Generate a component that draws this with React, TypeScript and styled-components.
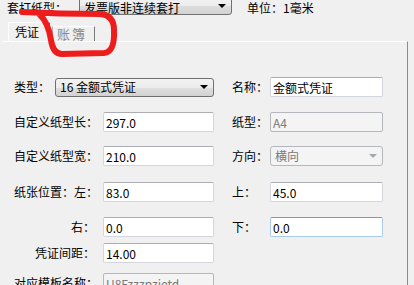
import React from 'react'
import styled, { createGlobalStyle } from 'styled-components'

const FONT = `'Noto Sans CJK SC', 'DejaVu Sans', sans-serif`

const GlobalStyle = createGlobalStyle`
  body {
    margin: 0;
    background: #f0f0f0;
    overflow: hidden;
  }
  * {
    box-sizing: border-box;
  }
`

const Screen = styled.div`
  position: relative;
  width: 414px;
  height: 285px;
  overflow: hidden;
  background: #f0f0f0;
  color: #000;
  font-family: ${FONT};
  font-size: 12px;
  line-height: 14px;
`

const TopBar = styled.div`
  display: flex;
  align-items: center;
  height: 21px;
  margin-top: -5px;
  padding-left: 7px;
`

const TopLabel = styled.span`
  width: 72px;
  padding-top: 4px;
`

const Unit = styled.span`
  margin-left: 15px;
  padding-top: 4px;
`

const Combo = styled.div<{ $width: number; $disabled?: boolean }>`
  display: flex;
  align-items: center;
  justify-content: space-between;
  width: ${({ $width }) => $width}px;
  height: ${({ $disabled }) => ($disabled ? 20 : 19)}px;
  padding: 0 5px 0 4px;
  border: 1px solid ${({ $disabled }) => ($disabled ? '#b4b8bc' : '#707070')};
  border-radius: 3px;
  background: ${({ $disabled }) =>
    $disabled
      ? '#f4f4f4'
      : 'linear-gradient(#f3f3f3, #ececec 50%, #dfdfdf 51%, #d2d2d2)'};
  color: ${({ $disabled }) => ($disabled ? '#7a7a7a' : '#000')};
  white-space: nowrap;
`

const Arrow = styled.span<{ $disabled?: boolean }>`
  width: 0;
  height: 0;
  border-left: 4px solid transparent;
  border-right: 4px solid transparent;
  border-top: 4px solid ${({ $disabled }) => ($disabled ? '#a8a8a8' : '#000')};
`

const TabStrip = styled.div`
  display: flex;
  align-items: stretch;
  height: 19px;
  margin-top: 6px;
  padding-left: 8px;
`

const Tab = styled.div<{ $active?: boolean }>`
  display: flex;
  align-items: center;
  flex: none;
  white-space: nowrap;
  width: ${({ $active }) => ($active ? 42 : 43)}px;
  padding-left: ${({ $active }) => ($active ? 6 : 4)}px;
  margin-left: ${({ $active }) => ($active ? 0 : 2)}px;
  margin-top: ${({ $active }) => ($active ? 0 : 4)}px;
  color: ${({ $active }) => ($active ? '#000' : '#8a8a8a')};
  font-size: ${({ $active }) => ($active ? 12 : 13)}px;
  border-left: 1px solid ${({ $active }) => ($active ? '#fff' : '#b0b0b0')};
  border-right: 1px solid #7a7a7a;
  border-top: 1px solid #fff;
  letter-spacing: ${({ $active }) => ($active ? 0 : 2)}px;
`

const Panel = styled.div`
  width: 406px;
  height: 260px;
  margin-left: 2px;
  border-top: 1px solid #fff;
  border-right: 1px solid #8c8c8c;
  padding: 35px 0 0 12px;
`

const Row = styled.div<{ $wide?: boolean; $gap: number }>`
  display: grid;
  grid-template-columns: ${({ $wide }) =>
    $wide ? '41px 159px 18px 38px 113px' : '89px 111px 18px 38px 113px'};
  align-items: center;
  height: 20px;
  margin-top: ${({ $gap }) => $gap}px;
`

const Label = styled.span<{ $right?: boolean }>`
  text-align: ${({ $right }) => ($right ? 'right' : 'left')};
  padding-right: ${({ $right }) => ($right ? 8 : 0)}px;
  white-space: nowrap;
`

const SideLabel = styled.span`
  grid-column: 4;
  white-space: nowrap;
`

const Field = styled.input<{ $focus?: boolean }>`
  width: 100%;
  height: 20px;
  margin: 0;
  padding: 0 2px;
  border: 1px solid ${({ $focus }) => ($focus ? '#a9cbec' : '#d3d6dc')};
  border-top-color: ${({ $focus }) => ($focus ? '#6f9fce' : '#abadb3')};
  border-radius: 2px;
  background: #fff;
  color: #000;
  font-family: ${FONT};
  font-size: 12px;
  outline: none;

  &:disabled {
    background: #f4f4f4;
    border-color: #b4b8bc;
    color: #7a7a7a;
  }
`

const Field2 = styled(Field)`
  grid-column: 5;
`

const ComboCell = styled.div`
  grid-column: 5;
`

const Scribble = styled.svg`
  position: absolute;
  left: 0;
  top: 0;
  pointer-events: none;
`

export default function App() {
  return (
    <Screen>
      <GlobalStyle />
      <TopBar>
        <TopLabel>套打纸型：</TopLabel>
        <Combo $width={153}>
          <span style={{ paddingTop: 4 }}>发票版非连续套打</span>
          <Arrow />
        </Combo>
        <Unit>单位：1毫米</Unit>
      </TopBar>

      <TabStrip>
        <Tab $active>凭证</Tab>
        <Tab>账簿</Tab>
      </TabStrip>

      <Panel>
        <Row $wide $gap={0}>
          <Label>类型：</Label>
          <Combo $width={159}>
            <span>16 金额式凭证</span>
            <Arrow />
          </Combo>
          <SideLabel>名称：</SideLabel>
          <Field2 defaultValue='金额式凭证' />
        </Row>
        <Row $gap={15}>
          <Label>自定义纸型长：</Label>
          <Field defaultValue='297.0' />
          <SideLabel>纸型：</SideLabel>
          <Field2 disabled defaultValue='A4' />
        </Row>
        <Row $gap={14}>
          <Label>自定义纸型宽：</Label>
          <Field defaultValue='210.0' />
          <SideLabel>方向：</SideLabel>
          <ComboCell>
            <Combo $width={113} $disabled>
              <span>横向</span>
              <Arrow $disabled />
            </Combo>
          </ComboCell>
        </Row>
        <Row $gap={16}>
          <Label>纸张位置：左：</Label>
          <Field defaultValue='83.0' />
          <SideLabel>上：</SideLabel>
          <Field2 defaultValue='45.0' />
        </Row>
        <Row $gap={15}>
          <Label $right>右：</Label>
          <Field defaultValue='0.0' />
          <SideLabel>下：</SideLabel>
          <Field2 $focus defaultValue='0.0' />
        </Row>
        <Row $gap={6}>
          <Label $right>凭证间距：</Label>
          <Field defaultValue='14.00' />
        </Row>
        <Row $gap={10}>
          <Label $right>对应模板名称：</Label>
          <Field disabled defaultValue='U8Fzzzpzjetd' />
        </Row>
      </Panel>

      <Scribble width='130' height='64' viewBox='0 0 130 64'>
        <path
          d='M22 12 Q 60 14 100 14 Q 114 15 114 30 Q 115 52 104 53 L 62 54 Q 53 54 51 40 Q 48 22 40 15'
          fill='none'
          stroke='#ee1d1d'
          strokeWidth='6'
          strokeLinecap='round'
          strokeLinejoin='round'
        />
      </Scribble>
    </Screen>
  )
}
